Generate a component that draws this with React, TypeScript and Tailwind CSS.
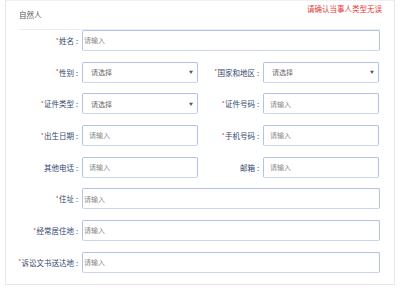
const font = { fontFamily: '"Noto Sans CJK SC", "Noto Sans", sans-serif' };

const Label = ({ text, required, w }: { text: string; required?: boolean; w: string }) => (
  <div className={`${w} shrink-0 flex items-center justify-end pr-[3px] text-[7.5px] text-[#34466e] whitespace-nowrap`}>
    {required && <span className="text-[#e03a3a] text-[6.5px]">*</span>}
    <span>{text}</span>
    <span className="ml-[2px] mr-[1px]">:</span>
  </div>
);

const Input = ({ w, pad }: { w: string; pad: string }) => (
  <div
    className={`${w} h-full shrink-0 flex items-center ${pad} border border-[#b3c1ec] border-b-[#ccd5f0] rounded-[2px] text-[7px] text-[#8a8a8a] bg-white`}
  >
    请输入
  </div>
);

const Select = ({ w }: { w: string }) => (
  <div
    className={`${w} h-full shrink-0 flex items-center justify-between pl-[8px] pr-[4px] border border-[#b3c1ec] border-b-[#ccd5f0] rounded-[2px] text-[7px] text-[#6a6a6a] bg-white`}
  >
    <span>请选择</span>
    <span className="text-[4px] text-[#555]">▼</span>
  </div>
);

export default function App() {
  return (
    <div className="w-[400px] h-[300px] bg-white" style={font}>
      <div className="ml-[5px] w-[390px] h-[285px] border border-[#e6e6e6] border-t-[#f0f0f0] relative">
        <div className="absolute right-[12px] top-[2px] text-[7.5px] text-[#e23b3b]">请确认当事人类型无误</div>
        <div className="pl-[13px] pt-[8px] text-[7.5px] text-[#555] h-[28px]">自然人</div>
        <div className="ml-[13px] w-[361px] border-t border-[#ececec]" />
        <div className="flex flex-col gap-[10.7px] pl-[13px]">
          <div className="flex h-[21px]">
            <Label text="姓名" required w="w-[63px]" />
            <Input w="w-[298px]" pad="pl-[1px]" />
          </div>
          <div className="flex h-[21px]">
            <Label text="性别" required w="w-[63px]" />
            <Select w="w-[116px]" />
            <Label text="国家和地区" required w="w-[65px]" />
            <Select w="w-[116px]" />
          </div>
          <div className="flex h-[21px]">
            <Label text="证件类型" required w="w-[63px]" />
            <Select w="w-[116px]" />
            <Label text="证件号码" required w="w-[65px]" />
            <Input w="w-[116px]" pad="pl-[6px]" />
          </div>
          <div className="flex h-[21px]">
            <Label text="出生日期" required w="w-[63px]" />
            <Input w="w-[116px]" pad="pl-[6px]" />
            <Label text="手机号码" required w="w-[65px]" />
            <Input w="w-[116px]" pad="pl-[6px]" />
          </div>
          <div className="flex h-[21px]">
            <Label text="其他电话" w="w-[63px]" />
            <Input w="w-[116px]" pad="pl-[6px]" />
            <Label text="邮箱" w="w-[65px]" />
            <Input w="w-[116px]" pad="pl-[6px]" />
          </div>
          <div className="flex h-[21px]">
            <Label text="住址" required w="w-[63px]" />
            <Input w="w-[298px]" pad="pl-[1px]" />
          </div>
          <div className="flex h-[21px]">
            <Label text="经常居住地" required w="w-[63px]" />
            <Input w="w-[298px]" pad="pl-[1px]" />
          </div>
          <div className="flex h-[21px]">
            <Label text="诉讼文书送达地" required w="w-[63px]" />
            <Input w="w-[298px]" pad="pl-[1px]" />
          </div>
        </div>
      </div>
    </div>
  );
}
